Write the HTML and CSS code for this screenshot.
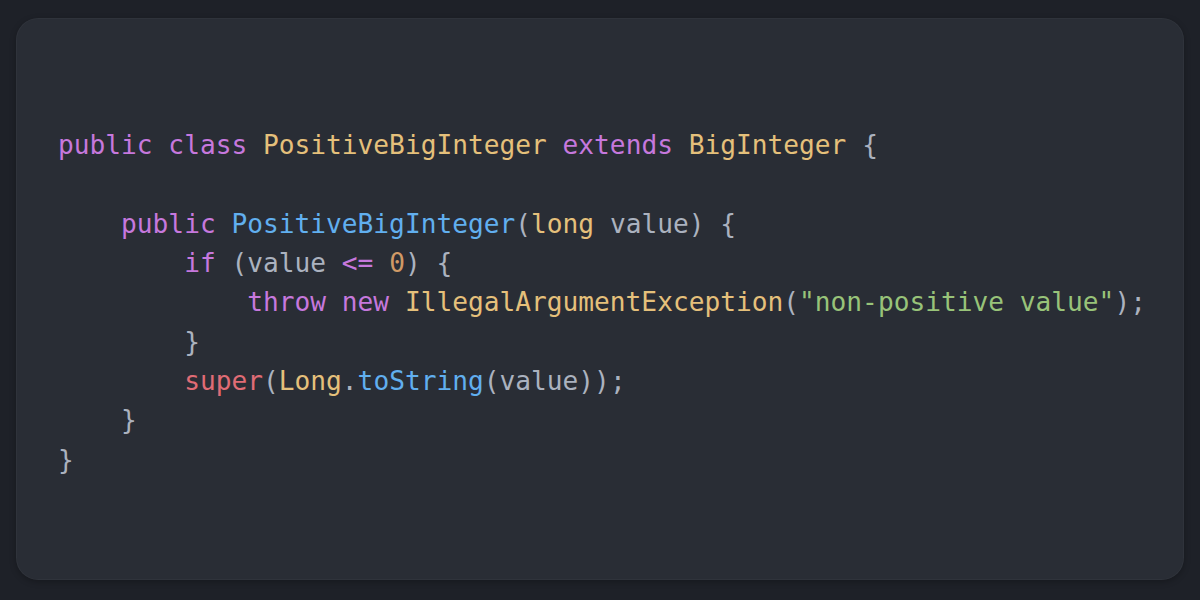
FILE: index.html
```html
<!DOCTYPE html>
<html>
<head>
<meta charset="utf-8">
<link rel="stylesheet" href="styles.css">
</head>
<body>
<div class="card">
  <div class="code">
    <div class="ln i0"><span class="kw">public class</span> <span class="ty">PositiveBigInteger</span> <span class="kw">extends</span> <span class="ty">BigInteger</span> {</div>
    <div class="ln i0"> </div>
    <div class="ln i1"><span class="kw">public</span> <span class="fn">PositiveBigInteger</span>(<span class="ty">long</span> value) {</div>
    <div class="ln i2"><span class="kw">if</span> (value <span class="kw">&lt;=</span> <span class="num">0</span>) {</div>
    <div class="ln i3"><span class="kw">throw new</span> <span class="ty">IllegalArgumentException</span>(<span class="str">"non-positive value"</span>);</div>
    <div class="ln i2">}</div>
    <div class="ln i2"><span class="sup">super</span>(<span class="ty">Long</span>.<span class="fn">toString</span>(value));</div>
    <div class="ln i1">}</div>
    <div class="ln i0">}</div>
  </div>
</div>
</body>
</html>
```
FILE: styles.css
```css
html, body {
  margin: 0;
  padding: 0;
  background: #1e2128;
  width: 1200px;
  height: 600px;
  overflow: hidden;
}
body {
  padding: 18px 16px 20px 16px;
  box-sizing: border-box;
}
.card {
  height: 562px;
  background: #292d35;
  border-radius: 22px;
  box-shadow: 0 2px 6px rgba(0,0,0,0.25), inset 0 0 0 1px rgba(255,255,255,0.03);
  display: flex;
  align-items: center;
  padding: 8px 42px 0 42px;
  box-sizing: border-box;
}
.code {
  margin: 0;
  font-family: "DejaVu Sans Mono", monospace;
  font-size: 26.2px;
  line-height: 39.4px;
  color: #abb2bf;
}
.ln {
  white-space: pre;
  height: 39.4px;
}
.i1 { padding-left: 4ch; }
.i2 { padding-left: 8ch; }
.i3 { padding-left: 12ch; }
.kw { color: #c678dd; }
.ty { color: #e5c07b; }
.fn { color: #61afef; }
.str { color: #98c379; }
.num { color: #d19a66; }
.sup { color: #e06c75; }
```
